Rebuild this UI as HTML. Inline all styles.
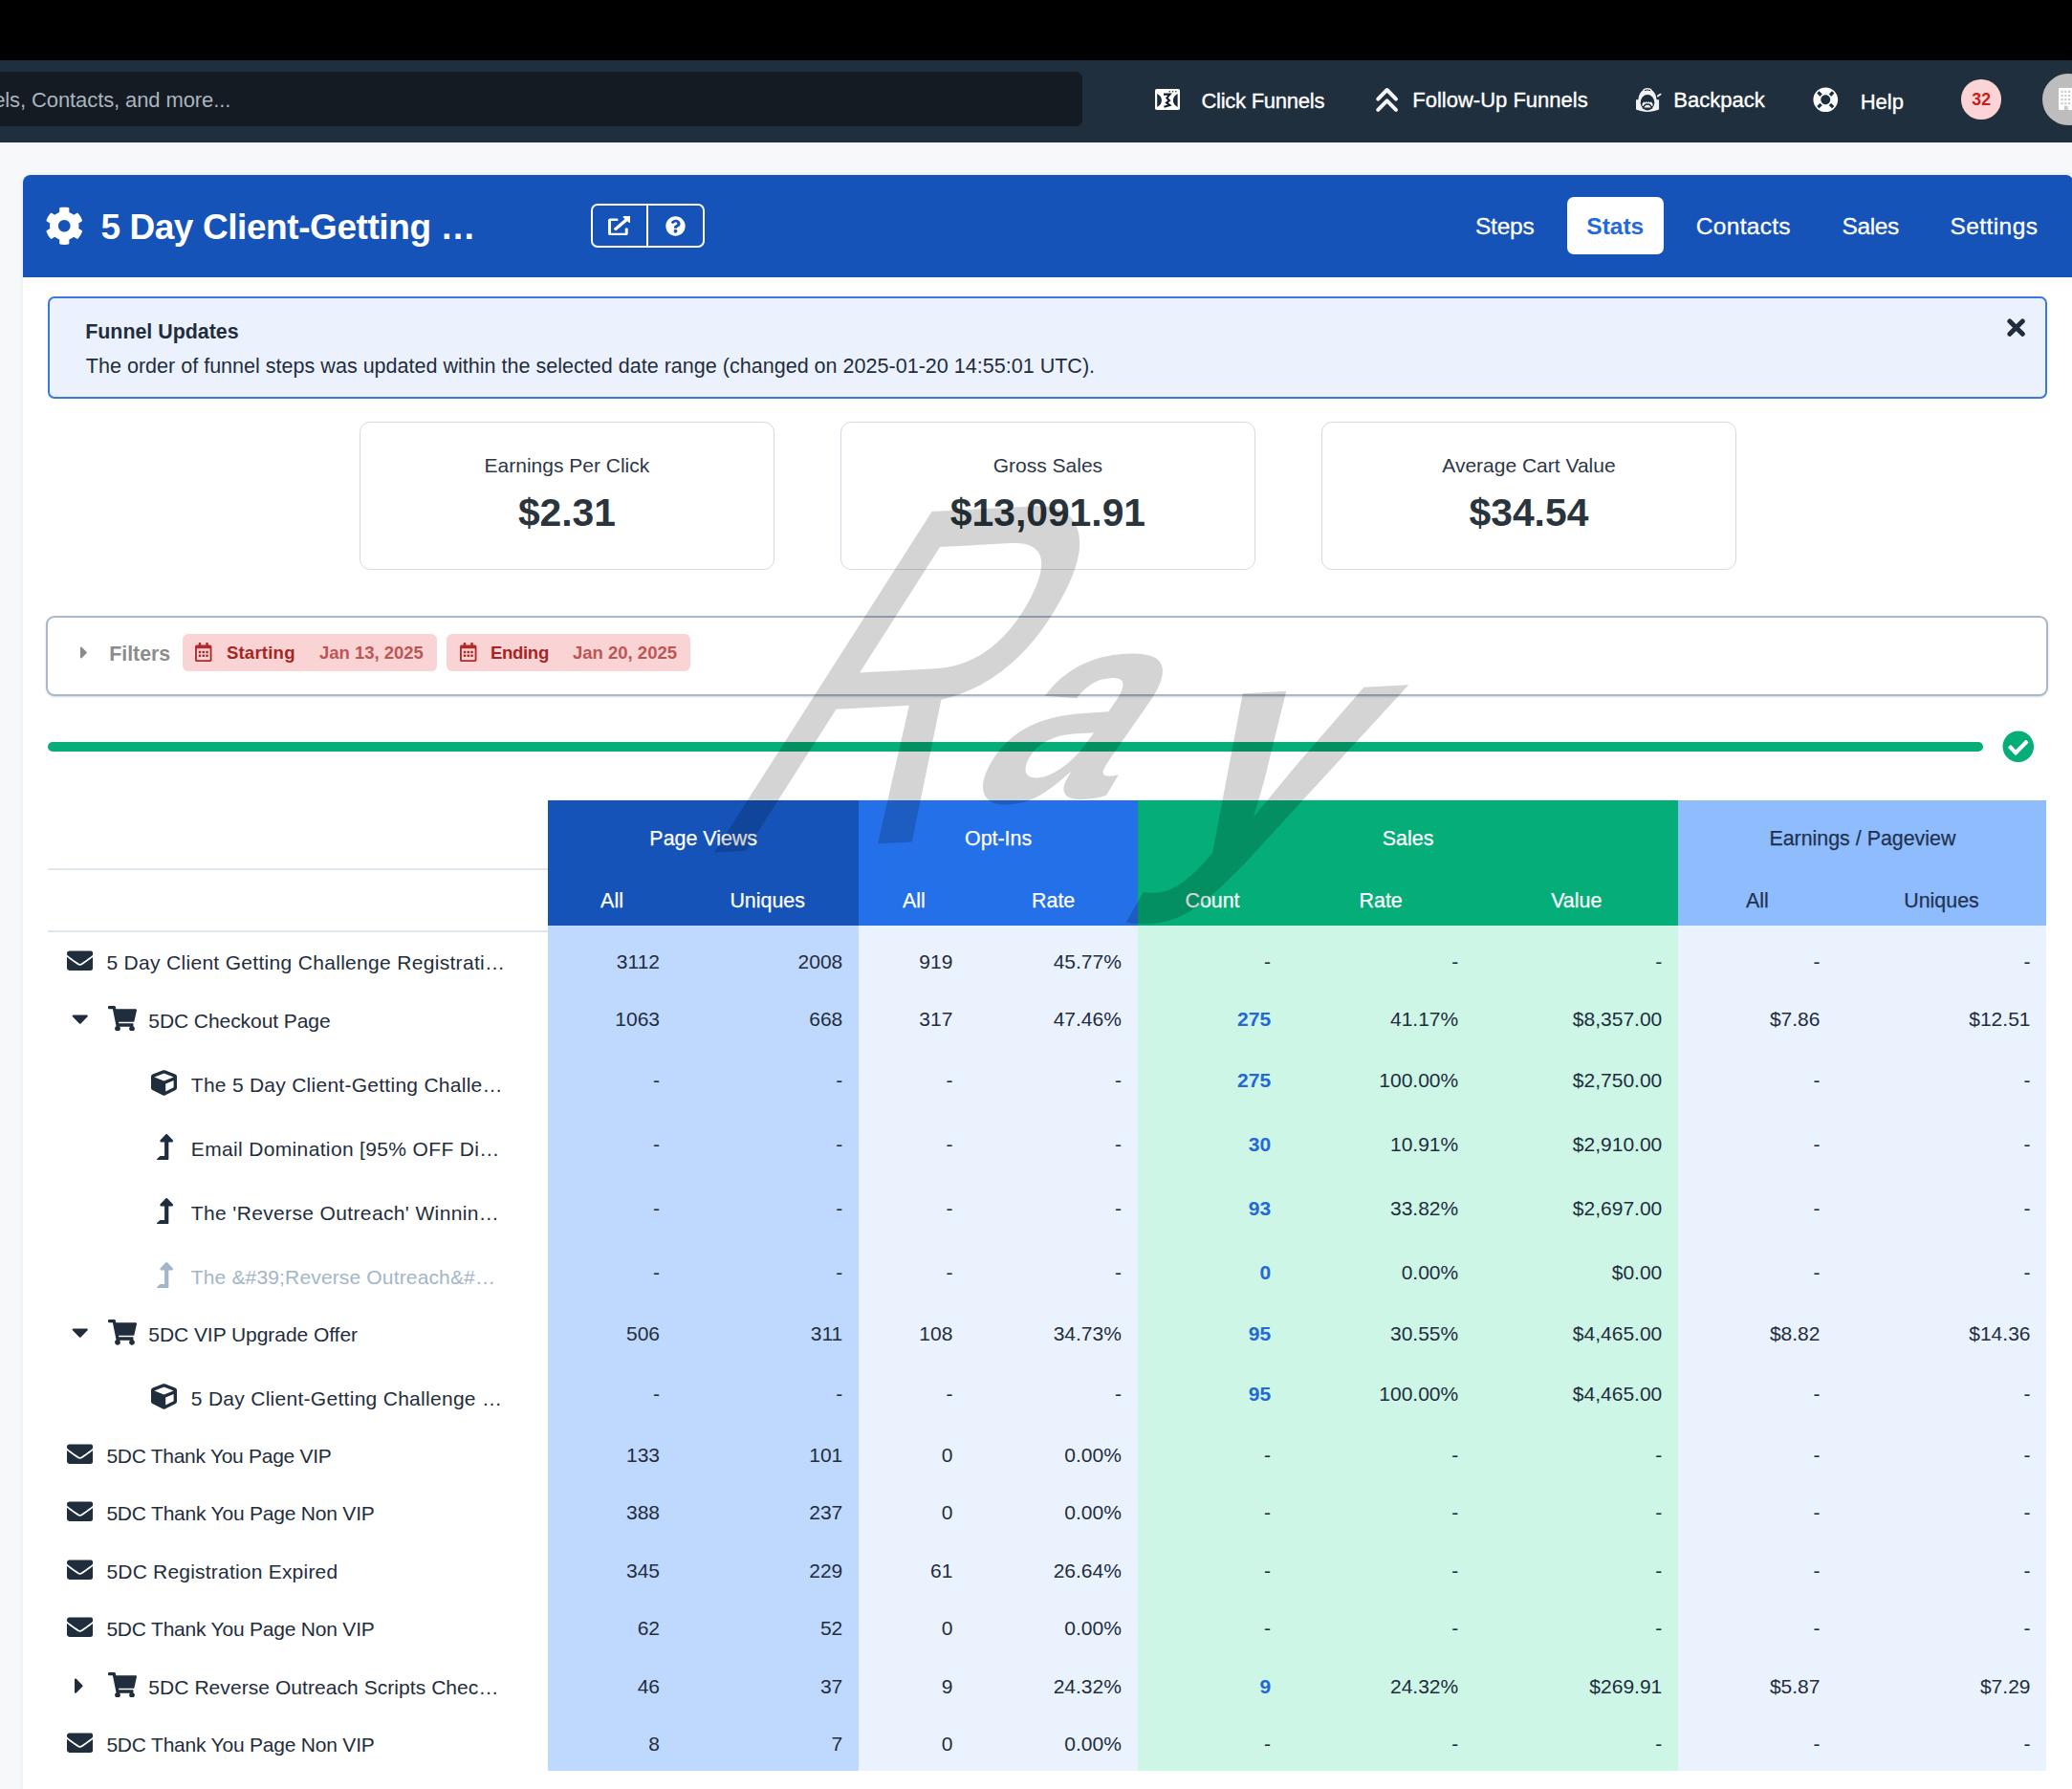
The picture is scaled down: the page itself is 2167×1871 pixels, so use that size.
<!DOCTYPE html>
<html lang="en">
<head>
<meta charset="utf-8">
<title>5 Day Client-Getting Challenge - Stats</title>
<style>
*{box-sizing:border-box;margin:0;padding:0}
html,body{width:2167px;height:1871px;overflow:hidden;background:#f6f8fa}
body{font-family:"Liberation Sans",sans-serif;color:#1f2d3d;font-size:21px;position:relative}
svg{display:block}
.abs{position:absolute}
#os{position:absolute;left:0;top:0;width:2167px;height:62.5px;background:#000}
#nav{position:absolute;left:0;top:62.5px;width:2167px;height:86px;background:#1f2f3e}
#search{position:absolute;left:-10px;top:12.7px;width:1142px;height:57px;border-radius:7px;background:#141b22}
#search span{position:absolute;left:3.2px;top:1.3px;line-height:57px;font-size:22px;color:#a9b4bf;white-space:nowrap;letter-spacing:-0.1px}
.nv{position:absolute;color:#fff;font-size:22px;white-space:nowrap;line-height:26px;-webkit-text-stroke:0.35px #fff}
#badge{position:absolute;left:2051.4px;top:20.8px;width:41.5px;height:41.5px;border-radius:50%;background:#fbd5d5;color:#c81e1e;font-weight:bold;font-size:17.7px;text-align:center;line-height:41.5px;padding-top:0.3px}
#avatar{position:absolute;left:2135.8px;top:14.4px;width:53.8px;height:53.8px;border-radius:50%;background:#bdbdbd;overflow:hidden}
#panel{position:absolute;left:24px;top:182.5px;width:2150px;height:1700px;background:#fff;border-radius:9px 9px 0 0;box-shadow:0 0 4px rgba(60,80,110,.10)}
#fhead{position:absolute;left:0;top:0;width:2143.5px;height:107px;background:#1553b8;border-radius:8px 7px 0 0}
#title{position:absolute;left:81.4px;top:24.5px;font-size:37px;font-weight:bold;color:#fff;white-space:nowrap;line-height:62px;letter-spacing:-0.42px}
#btns{position:absolute;left:594.2px;top:30.5px;width:119px;height:46.3px;border:2px solid #fff;border-radius:7px}
#btns i{position:absolute;left:55.8px;top:0;width:2px;height:100%;background:#fff}
.tab{position:absolute;top:23.6px;height:60.2px;line-height:60.2px;font-size:24.5px;color:#fff;white-space:nowrap;-webkit-text-stroke:0.3px #fff}
.tab.on{background:#fff;color:#2468e0;font-weight:bold;border-radius:7px;text-align:center;-webkit-text-stroke:0}
#alert{position:absolute;left:26px;top:127.3px;width:2091px;height:107.2px;border:2px solid #3b78d8;border-radius:7px;background:#ebf2fe}
#alert b{position:absolute;left:37.2px;top:19.9px;font-size:21.4px;line-height:30px;white-space:nowrap}
#alert span{position:absolute;left:37.8px;top:56.4px;font-size:21.55px;line-height:30px;white-space:nowrap}
.card{position:absolute;top:258px;width:434.7px;height:155.2px;border:1.6px solid #d3dce6;border-radius:11px;text-align:center}
.card .l{position:absolute;left:0;right:0;top:30.5px;font-size:21px;line-height:30px;color:#2d3748}
.card .v{position:absolute;left:0;right:0;top:69.2px;font-size:40.8px;font-weight:bold;line-height:50px;color:#2a343c}
#filters{position:absolute;left:24.4px;top:461.6px;width:2094px;height:84px;border:2px solid #a9b9c9;border-radius:9px;background:#fff;box-shadow:0 1px 2px rgba(80,100,130,.25)}
.pill{position:absolute;top:16.5px;height:39.8px;border-radius:6px;background:#fad4d4;color:#a82424;font-weight:bold;white-space:nowrap}
.pill .a{position:absolute;top:0;line-height:39.8px;font-size:18.6px}
.pill .b{position:absolute;top:0;line-height:39.8px;font-size:18.5px;opacity:.72}
#bar{position:absolute;left:26.4px;top:593.1px;width:2023.6px;height:10px;border-radius:5px;background:#05ad78}

#tbl{position:absolute;left:26px;top:654.8px;width:2090.5px;height:1015px}
.th{position:absolute;text-align:center;font-size:21.4px;line-height:30px;color:#fff;white-space:nowrap;-webkit-text-stroke:0.25px currentColor}
.th.dk{color:#1f3350}
.tr{position:absolute;left:0;width:2090.5px}
.nm{position:absolute;font-size:21px;line-height:30px;white-space:nowrap}
.td{position:absolute;text-align:right;padding-right:17px;font-size:21px;line-height:30px;white-space:nowrap}
.td.lk{color:#2468d8;font-weight:bold}
#wm{position:absolute;left:0;top:0;width:2167px;height:1871px;font-family:"Liberation Sans",sans-serif;font-style:italic;color:#000;opacity:.165;pointer-events:none;overflow:hidden}
#wm span{position:absolute;line-height:1;white-space:nowrap;transform-origin:0 84.65%;transform:rotate(-3deg) skewX(-30deg)}
#wm .r{font-size:500px;left:736px;top:468.8px;transform:rotate(-3deg) skewX(-30deg) scaleX(.71)}
#wm .a{font-size:276px;font-weight:bold;left:1013px;top:607.4px}
#wm .y{font-size:320px;font-weight:bold;left:1216px;top:628.1px;transform:rotate(-3deg) skewX(-24deg)}
</style>
</head>
<body>
<div id="os"></div>
<div id="nav">
  <div id="search"><span>els, Contacts, and more...</span></div>
  <svg class="abs" style="left:1208.2px;top:30.5px" width="26" height="22" viewBox="0 0 26 22"><rect x="0" y="0" width="26" height="22" rx="1.8" fill="#fff"/><path d="M2.2 5 C8.5 8.2 8.5 15.8 2.2 19 Z" fill="#1b2b3c"/><path d="M23.6 5 C17.3 8.2 17.3 15.8 23.6 19 Z" fill="#1b2b3c"/><path d="M9 5.6 L15.6 5.6 L12.4 9.4 L15 12.2 L12 14.4 L15.4 17 L9.4 18.8" fill="none" stroke="#141c26" stroke-width="2.1" stroke-linejoin="miter"/><circle cx="15.3" cy="2.7" r=".8" fill="#222"/><circle cx="18.6" cy="2.7" r=".8" fill="#222"/><circle cx="21.9" cy="2.7" r=".8" fill="#222"/></svg>
  <div class="nv" style="left:1256.4px;top:30.6px;letter-spacing:-0.25px">Click Funnels</div>
  <svg class="abs" style="left:1436px;top:26px" width="30" height="30" viewBox="0 0 30 30"><path d="M5.2 14.6 L14.6 5 L24 14.6 M5.2 25.9 L14.6 16.3 L24 25.9" fill="none" stroke="#f4f5f6" stroke-width="4" stroke-linecap="round" stroke-linejoin="round"/></svg>
  <div class="nv" style="left:1477.3px;top:29.2px">Follow-Up Funnels</div>
  <svg class="abs" style="left:1708px;top:27px" width="32" height="30" viewBox="0 0 32 30"><path d="M3 14.3 L5.4 14.3 C6 8 8.6 5.4 10 4.7 C10.6 1 19.400 1 20 4.700 C21.400 5.400 24 8 24.600 14.300 L27.100 14.300 L27.100 24.600 C19 27.800 11 27.800 3 24.600 Z" fill="#f1f2f4"/><path d="M12 4.600 Q15 3.300 18 4.600" fill="none" stroke="#1b2b3c" stroke-width="1"/><ellipse cx="15" cy="17.300" rx="7.300" ry="8.200" fill="#1b2b3c"/><path d="M9.500 18.500 L11.300 16.300 L12.600 17.600 L13.800 16 L15 17.500 L16.200 16 L17.400 17.600 L18.700 16.300 L20.500 18.500 L20.500 21 L9.500 21 Z" fill="#f1f2f4"/><path d="M10.600 23.200 C11.500 17.600 18.500 17.600 19.400 23.200 Z" fill="#f1f2f4" stroke="#1b2b3c" stroke-width="1.300"/><path d="M25.800 10.600 L28.600 8.600" stroke="#f1f2f4" stroke-width="1.800" stroke-linecap="round"/></svg>
  <div class="nv" style="left:1750.3px;top:29.2px">Backpack</div>
  <svg class="abs" style="left:1896.2px;top:28px" width="26.600" height="26.600" viewBox="0 0 512 512"><path fill="#fff" d="M256 8C119.033 8 8 119.033 8 256s111.033 248 248 248 248-111.033 248-248S392.967 8 256 8zm173.696 119.559l-63.399 63.399c-10.987-18.559-26.670-34.252-45.255-45.255l63.399-63.399a218.396 218.396 0 0 1 45.255 45.255zM256 352c-53.019 0-96-42.981-96-96s42.981-96 96-96 96 42.981 96 96-42.981 96-96 96zM127.559 82.304l63.399 63.399c-18.559 10.987-34.252 26.670-45.255 45.255l-63.399-63.399a218.372 218.372 0 0 1 45.255-45.255zM82.304 384.441l63.399-63.399c10.987 18.559 26.670 34.252 45.255 45.255l-63.399 63.399a218.396 218.396 0 0 1-45.255-45.255zm302.137 45.255l-63.399-63.399c18.559-10.987 34.252-26.670 45.255-45.255l63.399 63.399a218.403 218.403 0 0 1-45.255 45.255z"/></svg>
  <div class="nv" style="left:1945.7px;top:31.1px">Help</div>
  <div id="badge">32</div>
  <div id="avatar"><svg class="abs" style="left:17.3px;top:15.2px" width="16.4" height="24.6" viewBox="0 0 20 30"><rect x="0" y="0" width="20" height="28" rx="1.500" fill="#fff"/><g fill="#c9c9c9"><rect x="3" y="3.500" width="2.600" height="2.600"/><rect x="7.600" y="3.500" width="2.600" height="2.600"/><rect x="12.200" y="3.500" width="2.600" height="2.600"/><rect x="3" y="8.500" width="2.600" height="2.600"/><rect x="7.600" y="8.500" width="2.600" height="2.600"/><rect x="12.200" y="8.500" width="2.600" height="2.600"/><rect x="3" y="13.500" width="2.600" height="2.600"/><rect x="7.600" y="13.500" width="2.600" height="2.600"/><rect x="12.200" y="13.500" width="2.600" height="2.600"/><rect x="3" y="18.500" width="2.600" height="2.600"/><rect x="7.600" y="18.500" width="2.600" height="2.600"/><rect x="12.200" y="18.500" width="2.600" height="2.600"/><rect x="7" y="23" width="5" height="5"/></g></svg></div>
</div>
<div id="panel">
  <div id="fhead">
    <svg class="abs" style="left:22.600px;top:33px" width="40.500" height="40.500" viewBox="0 0 512 512"><path fill="#fff" d="M487.4 315.7l-42.6-24.600c4.300-23.200 4.300-47 0-70.200l42.600-24.600c4.900-2.800 7.100-8.600 5.500-14-11.100-35.600-30-67.800-54.700-94.600-3.800-4.100-10-5.100-14.800-2.300L380.800 110c-17.900-15.400-38.500-27.300-60.800-35.100V25.800c0-5.600-3.900-10.500-9.400-11.700-36.700-8.200-74.300-7.800-109.200 0-5.500 1.200-9.400 6.100-9.400 11.700V75c-22.200 7.900-42.800 19.800-60.800 35.100L88.700 85.500c-4.900-2.800-11-1.900-14.800 2.300-24.700 26.700-43.600 58.900-54.700 94.600-1.700 5.400.6 11.200 5.500 14L67.300 221c-4.300 23.200-4.300 47 0 70.200l-42.600 24.600c-4.900 2.800-7.100 8.600-5.500 14 11.100 35.600 30 67.800 54.700 94.600 3.800 4.100 10 5.100 14.800 2.300l42.600-24.600c17.900 15.400 38.500 27.300 60.800 35.100v49.200c0 5.600 3.900 10.500 9.400 11.700 36.700 8.200 74.300 7.800 109.200 0 5.500-1.200 9.400-6.100 9.400-11.700v-49.200c22.200-7.900 42.800-19.800 60.800-35.100l42.600 24.600c4.900 2.800 11 1.900 14.800-2.300 24.700-26.700 43.600-58.900 54.700-94.600 1.500-5.500-.7-11.300-5.600-14.100zM256 336c-44.100 0-80-35.900-80-80s35.900-80 80-80 80 35.900 80 80-35.900 80-80 80z"/></svg>
    <div id="title">5 Day Client-Getting …</div>
    <div id="btns"><i></i>
      <svg class="abs" style="left:15.500px;top:10.500px" width="23.700" height="20.200" viewBox="0 0 512 512" preserveAspectRatio="none"><path fill="#fff" d="M432,320H400a16,16,0,0,0-16,16V448H64V128H208a16,16,0,0,0,16-16V80a16,16,0,0,0-16-16H48A48,48,0,0,0,0,112V464a48,48,0,0,0,48,48H400a48,48,0,0,0,48-48V336A16,16,0,0,0,432,320ZM488,0h-128c-21.370,0-32.050,25.910-17,41l35.730,35.730L135,320.370a24,24,0,0,0,0,34L157.670,377a24,24,0,0,0,34,0L435.280,133.320,471,169c15,15,41,4.500,41-17V24A24,24,0,0,0,488,0Z"/></svg>
      <svg class="abs" style="left:76px;top:10.600px" width="21" height="21" viewBox="0 0 512 512"><path fill="#fff" d="M504 256c0 136.997-111.043 248-248 248S8 392.997 8 256C8 119.083 119.043 8 256 8s248 111.083 248 248zM262.655 90c-54.497 0-89.255 22.957-116.549 63.758-3.536 5.286-2.353 12.415 2.715 16.258l34.699 26.310c5.205 3.947 12.621 3.008 16.665-2.122 17.864-22.658 30.113-35.797 57.303-35.797 20.429 0 45.698 13.148 45.698 32.958 0 14.976-12.363 22.667-32.534 33.976C247.128 238.528 216 254.941 216 296v4c0 6.627 5.373 12 12 12h56c6.627 0 12-5.373 12-12v-1.333c0-28.462 83.186-29.647 83.186-106.667 0-58.002-60.165-102-116.531-102zM256 338c-25.365 0-46 20.635-46 46 0 25.364 20.635 46 46 46s46-20.636 46-46c0-25.365-20.635-46-46-46z"/></svg>
    </div>
    <div class="tab" style="left:1519px;top:24.900px;letter-spacing:-0.25px">Steps</div>
    <div class="tab on" style="left:1614.600px;width:101.400px;padding-top:1.300px">Stats</div>
    <div class="tab" style="left:1749.800px;top:24.900px;letter-spacing:0.3px">Contacts</div>
    <div class="tab" style="left:1902.500px;top:24.900px;letter-spacing:-0.4px">Sales</div>
    <div class="tab" style="left:2015.600px;top:24.900px;letter-spacing:0.4px">Settings</div>
  </div>
  <div id="alert"><b>Funnel Updates</b><span>The order of funnel steps was updated within the selected date range (changed on 2025-01-20 14:55:01 UTC).</span><svg class="abs" style="left:2047.4px;top:21px" width="19.2" height="19.2" viewBox="0 0 19.2 19.2"><path d="M2.9 2.9 L16.3 16.3 M16.3 2.9 L2.9 16.3" stroke="#1f2d3d" stroke-width="5" stroke-linecap="round"/></svg></div>
  <div class="card" style="left:351.6px"><div class="l">Earnings Per Click</div><div class="v">$2.31</div></div>
  <div class="card" style="left:854.6px"><div class="l">Gross Sales</div><div class="v">$13,091.91</div></div>
  <div class="card" style="left:1357.6px"><div class="l">Average Cart Value</div><div class="v">$34.54</div></div>
  <div id="filters">
    <svg class="abs" style="left:33.600px;top:26.300px" width="7.900" height="21" viewBox="0 0 192 512"><path fill="#8a8a8a" d="M0 384.662V127.338c0-17.818 21.543-26.741 34.142-14.142l128.662 128.662c7.810 7.810 7.810 20.474 0 28.284L34.142 398.804C21.543 411.404 0 402.480 0 384.662z"/></svg>
    <div class="abs" style="left:63.900px;top:23.200px;font-size:21.300px;font-weight:bold;line-height:30px;color:#8c8c8c">Filters</div>
    <div class="pill" style="left:140.900px;width:265.500px">
      <svg class="abs" style="left:12.800px;top:9.100px" width="17.500" height="20" viewBox="0 0 448 512"><path fill="#b02a2a" d="M148 288h-40c-6.600 0-12-5.400-12-12v-40c0-6.600 5.400-12 12-12h40c6.600 0 12 5.400 12 12v40c0 6.600-5.400 12-12 12zm108-12v-40c0-6.600-5.400-12-12-12h-40c-6.600 0-12 5.400-12 12v40c0 6.600 5.400 12 12 12h40c6.600 0 12-5.400 12-12zm96 0v-40c0-6.600-5.400-12-12-12h-40c-6.600 0-12 5.400-12 12v40c0 6.600 5.400 12 12 12h40c6.600 0 12-5.400 12-12zm-96 96v-40c0-6.600-5.400-12-12-12h-40c-6.600 0-12 5.400-12 12v40c0 6.600 5.400 12 12 12h40c6.600 0 12-5.400 12-12zm-96 0v-40c0-6.600-5.400-12-12-12h-40c-6.600 0-12 5.400-12 12v40c0 6.600 5.400 12 12 12h40c6.600 0 12-5.400 12-12zm192 0v-40c0-6.600-5.400-12-12-12h-40c-6.600 0-12 5.400-12 12v40c0 6.600 5.400 12 12 12h40c6.600 0 12-5.400 12-12zm96-260v352c0 26.500-21.500 48-48 48H48c-26.500 0-48-21.500-48-48V112c0-26.500 21.500-48 48-48h48V12c0-6.600 5.400-12 12-12h40c6.600 0 12 5.400 12 12v52h128V12c0-6.600 5.400-12 12-12h40c6.600 0 12 5.400 12 12v52h48c26.500 0 48 21.500 48 48zm-48 346V160H48v298c0 3.300 2.700 6 6 6h340c3.300 0 6-2.700 6-6z"/></svg>
      <span class="a" style="left:45.600px;letter-spacing:0.2px">Starting</span><span class="b" style="left:142.600px">Jan 13, 2025</span>
    </div>
    <div class="pill" style="left:417px;width:255px">
      <svg class="abs" style="left:13.700px;top:9.100px" width="17.500" height="20" viewBox="0 0 448 512"><path fill="#b02a2a" d="M148 288h-40c-6.600 0-12-5.400-12-12v-40c0-6.600 5.400-12 12-12h40c6.600 0 12 5.400 12 12v40c0 6.600-5.400 12-12 12zm108-12v-40c0-6.600-5.400-12-12-12h-40c-6.600 0-12 5.400-12 12v40c0 6.600 5.400 12 12 12h40c6.600 0 12-5.400 12-12zm96 0v-40c0-6.600-5.400-12-12-12h-40c-6.600 0-12 5.400-12 12v40c0 6.600 5.400 12 12 12h40c6.600 0 12-5.400 12-12zm-96 96v-40c0-6.600-5.400-12-12-12h-40c-6.600 0-12 5.400-12 12v40c0 6.600 5.400 12 12 12h40c6.600 0 12-5.400 12-12zm-96 0v-40c0-6.600-5.400-12-12-12h-40c-6.600 0-12 5.400-12 12v40c0 6.600 5.400 12 12 12h40c6.600 0 12-5.400 12-12zm192 0v-40c0-6.600-5.400-12-12-12h-40c-6.600 0-12 5.400-12 12v40c0 6.600 5.400 12 12 12h40c6.600 0 12-5.400 12-12zm96-260v352c0 26.500-21.500 48-48 48H48c-26.500 0-48-21.500-48-48V112c0-26.500 21.500-48 48-48h48V12c0-6.600 5.400-12 12-12h40c6.600 0 12 5.400 12 12v52h128V12c0-6.600 5.400-12 12-12h40c6.600 0 12 5.400 12 12v52h48c26.500 0 48 21.500 48 48zm-48 346V160H48v298c0 3.300 2.700 6 6 6h340c3.300 0 6-2.700 6-6z"/></svg>
      <span class="a" style="left:45.600px;letter-spacing:-0.35px">Ending</span><span class="b" style="left:131.600px">Jan 20, 2025</span>
    </div>
  </div>
  <div id="bar"></div>
  <svg class="abs" style="left:2070.100px;top:581.200px" width="33.600" height="33.600" viewBox="0 0 512 512"><circle cx="256" cy="256" r="200" fill="#fff"/><path fill="#05ad78" d="M504 256c0 136.967-111.033 248-248 248S8 392.967 8 256 119.033 8 256 8s248 111.033 248 248zM227.314 387.314l184-184c6.248-6.248 6.248-16.379 0-22.627l-22.627-22.627c-6.248-6.249-16.379-6.249-22.628 0L216 308.118l-70.059-70.059c-6.248-6.248-16.379-6.248-22.628 0l-22.627 22.627c-6.248 6.248-6.248 16.379 0 22.627l104 104c6.249 6.249 16.379 6.249 22.628.001z"/></svg>
  <!--TB0--><div id="tbl">
  <div class="abs" style="left:523px;top:0;width:325.3px;height:130.3px;background:#1553b8"></div><div class="abs" style="left:523px;top:130.3px;width:325.3px;height:884.7px;background:#bfd9fe"></div>
  <div class="abs" style="left:848.3px;top:0;width:291.6px;height:130.3px;background:#2370e8"></div><div class="abs" style="left:848.3px;top:130.3px;width:291.6px;height:884.7px;background:#eaf2fe"></div>
  <div class="abs" style="left:1139.9px;top:0;width:565.4px;height:130.3px;background:#05ad78"></div><div class="abs" style="left:1139.9px;top:130.3px;width:565.4px;height:884.7px;background:#cdf6e7"></div>
  <div class="abs" style="left:1705.3px;top:0;width:385.2px;height:130.3px;background:#8fbcfd"></div><div class="abs" style="left:1705.3px;top:130.3px;width:385.2px;height:884.7px;background:#eaf2fe"></div>
  <div class="abs" style="left:0;top:70.4px;width:523px;height:2px;background:#dfe6ec"></div><div class="abs" style="left:0;top:136px;width:523px;height:2px;background:#dfe6ec"></div>
  <div class="th " style="left:523px;width:325.3px;top:24.88px">Page Views</div>
  <div class="th " style="left:848.3px;width:291.6px;top:24.88px">Opt-Ins</div>
  <div class="th " style="left:1139.9px;width:565.4px;top:24.88px">Sales</div>
  <div class="th dk" style="left:1705.3px;width:385.2px;top:24.88px">Earnings / Pageview</div>
  <div class="th " style="left:523px;width:134px;top:89.88px">All</div>
  <div class="th " style="left:657px;width:191.3px;top:89.88px">Uniques</div>
  <div class="th " style="left:848.3px;width:115.1px;top:89.88px">All</div>
  <div class="th " style="left:963.4px;width:176.5px;top:89.88px">Rate</div>
  <div class="th " style="left:1139.9px;width:156.2px;top:89.88px">Count</div>
  <div class="th " style="left:1296.1px;width:196.1px;top:89.88px">Rate</div>
  <div class="th " style="left:1492.2px;width:213.1px;top:89.88px">Value</div>
  <div class="th dk" style="left:1705.3px;width:165.2px;top:89.88px">All</div>
  <div class="th dk" style="left:1870.5px;width:220px;top:89.88px">Uniques</div>
  <div class="tr" style="top:136.5px;height:60.4px"><svg class="abs" style="left:20px;top:17.1px" width="27.3" height="27.3" viewBox="0 0 512 512"><path fill="#1f2d3d" d="M502.3 190.8c3.9-3.1 9.7-.2 9.7 4.7V400c0 26.500-21.500 48-48 48H48c-26.500 0-48-21.500-48-48V195.600c0-5 5.700-7.800 9.700-4.700 22.400 17.400 52.100 39.500 154.100 113.600 21.100 15.400 56.700 47.800 92.200 47.600 35.700.3 72-32.800 92.300-47.600 102-74.100 131.600-96.300 154-113.700zM256 320c23.200.4 56.600-29.200 73.400-41.400 132.700-96.300 142.800-104.700 173.400-128.700 5.800-4.500 9.200-11.500 9.200-18.900v-19c0-26.500-21.500-48-48-48H48C21.500 64 0 85.500 0 112v19c0 7.400 3.400 14.300 9.200 18.900 30.600 23.900 40.700 32.400 173.400 128.700 16.800 12.200 50.200 41.800 73.400 41.400z"/></svg><div class="nm" style="left:61.4px;top:18.22px;color:#1f2d3d;letter-spacing:0.312px">5 Day Client Getting Challenge Registrati…</div><div class="td" style="left:523px;width:134px;top:17.12px">3112</div><div class="td" style="left:657px;width:191.3px;top:17.12px">2008</div><div class="td" style="left:848.3px;width:115.1px;top:17.12px">919</div><div class="td" style="left:963.4px;width:176.5px;top:17.12px">45.77%</div><div class="td" style="left:1139.9px;width:156.2px;top:17.12px">-</div><div class="td" style="left:1296.1px;width:196.1px;top:17.12px">-</div><div class="td" style="left:1492.2px;width:213.1px;top:17.12px">-</div><div class="td" style="left:1705.3px;width:165.2px;top:17.12px">-</div><div class="td" style="left:1870.5px;width:220px;top:17.12px">-</div></div>
  <div class="tr" style="top:197px;height:60.4px"><svg class="abs" style="left:25px;top:16.4px" width="17.5" height="28" viewBox="0 0 320 512"><path fill="#1f2d3d" d="M31.3 192h257.3c17.800 0 26.700 21.500 14.100 34.100L174.100 354.800c-7.800 7.800-20.500 7.800-28.300 0L17.200 226.100C4.600 213.500 13.500 192 31.300 192z"/></svg><svg class="abs" style="left:63px;top:17.3px" width="30" height="26.7" viewBox="0 0 576 512"><path fill="#1f2d3d" d="M528.12 301.319l47.273-208C578.806 78.301 567.391 64 551.99 64H159.208l-9.166-44.810C147.758 8.021 137.930 0 126.529 0H24C10.745 0 0 10.745 0 24v16c0 13.255 10.745 24 24 24h69.883l70.248 343.435C147.325 417.100 136 435.222 136 456c0 30.928 25.072 56 56 56s56-25.072 56-56c0-15.674-6.447-29.835-16.824-40h209.647C430.447 426.165 424 440.326 424 456c0 30.928 25.072 56 56 56s56-25.072 56-56c0-22.172-12.888-41.332-31.579-50.405l5.517-24.276c3.413-15.018-8.002-29.319-23.403-29.319H218.117l-6.545-32h293.145c11.206 0 20.920-7.754 23.403-18.681z"/></svg><div class="nm" style="left:105.3px;top:18.22px;color:#1f2d3d;letter-spacing:-0.07px">5DC Checkout Page</div><div class="td" style="left:523px;width:134px;top:17.12px">1063</div><div class="td" style="left:657px;width:191.3px;top:17.12px">668</div><div class="td" style="left:848.3px;width:115.1px;top:17.12px">317</div><div class="td" style="left:963.4px;width:176.5px;top:17.12px">47.46%</div><div class="td lk" style="left:1139.9px;width:156.2px;top:17.12px">275</div><div class="td" style="left:1296.1px;width:196.1px;top:17.12px">41.17%</div><div class="td" style="left:1492.2px;width:213.1px;top:17.12px">$8,357.00</div><div class="td" style="left:1705.3px;width:165.2px;top:17.12px">$7.86</div><div class="td" style="left:1870.5px;width:220px;top:17.12px">$12.51</div></div>
  <div class="tr" style="top:257.7px;height:67px"><svg class="abs" style="left:108.1px;top:23.9px" width="27" height="27" viewBox="0 0 512 512"><path fill="#1f2d3d" d="M239.1 6.3l-208 78c-18.700 7-31.100 25-31.100 45v225.100c0 18.200 10.300 34.800 26.500 42.900l208 104c13.500 6.800 29.400 6.800 42.900 0l208-104c16.300-8.100 26.500-24.800 26.500-42.900V129.300c0-20-12.400-37.900-31.100-44.900l-208-78C262 2.200 250 2.200 239.100 6.300zM256 68.400l192 72v1.100l-192 78-192-78v-1.100l192-72zm32 356V275.500l160-65v133.900l-160 80z"/></svg><div class="nm" style="left:149.8px;top:24.62px;color:#1f2d3d;letter-spacing:0.266px">The 5 Day Client-Getting Challe…</div><div class="td" style="left:523px;width:134px;top:20.22px">-</div><div class="td" style="left:657px;width:191.3px;top:20.22px">-</div><div class="td" style="left:848.3px;width:115.1px;top:20.22px">-</div><div class="td" style="left:963.4px;width:176.5px;top:20.22px">-</div><div class="td lk" style="left:1139.9px;width:156.2px;top:20.22px">275</div><div class="td" style="left:1296.1px;width:196.1px;top:20.22px">100.00%</div><div class="td" style="left:1492.2px;width:213.1px;top:20.22px">$2,750.00</div><div class="td" style="left:1705.3px;width:165.2px;top:20.22px">-</div><div class="td" style="left:1870.5px;width:220px;top:20.22px">-</div></div>
  <div class="tr" style="top:324.7px;height:67px"><svg class="abs" style="left:113.6px;top:23.8px" width="17" height="27.2" viewBox="0 0 320 512"><path fill="#1f2d3d" d="M313.553 119.669L209.587 7.666c-9.485-10.214-25.676-10.229-35.174 0L70.438 119.669C56.232 134.969 67.062 160 88.025 160H152v272H68.024a11.996 11.996 0 0 0-8.485 3.515l-56 56C-4.021 499.074 1.333 512 12.024 512H208c13.255 0 24-10.745 24-24V160h63.966c20.878 0 31.851-24.969 17.587-40.331z"/></svg><div class="nm" style="left:149.8px;top:24.62px;color:#1f2d3d;letter-spacing:0.348px">Email Domination [95% OFF Di…</div><div class="td" style="left:523px;width:134px;top:20.22px">-</div><div class="td" style="left:657px;width:191.3px;top:20.22px">-</div><div class="td" style="left:848.3px;width:115.1px;top:20.22px">-</div><div class="td" style="left:963.4px;width:176.5px;top:20.22px">-</div><div class="td lk" style="left:1139.9px;width:156.2px;top:20.22px">30</div><div class="td" style="left:1296.1px;width:196.1px;top:20.22px">10.91%</div><div class="td" style="left:1492.2px;width:213.1px;top:20.22px">$2,910.00</div><div class="td" style="left:1705.3px;width:165.2px;top:20.22px">-</div><div class="td" style="left:1870.5px;width:220px;top:20.22px">-</div></div>
  <div class="tr" style="top:391.7px;height:67px"><svg class="abs" style="left:113.6px;top:23.8px" width="17" height="27.2" viewBox="0 0 320 512"><path fill="#1f2d3d" d="M313.553 119.669L209.587 7.666c-9.485-10.214-25.676-10.229-35.174 0L70.438 119.669C56.232 134.969 67.062 160 88.025 160H152v272H68.024a11.996 11.996 0 0 0-8.485 3.515l-56 56C-4.021 499.074 1.333 512 12.024 512H208c13.255 0 24-10.745 24-24V160h63.966c20.878 0 31.851-24.969 17.587-40.331z"/></svg><div class="nm" style="left:149.8px;top:24.62px;color:#1f2d3d;letter-spacing:0.363px">The 'Reverse Outreach' Winnin…</div><div class="td" style="left:523px;width:134px;top:20.22px">-</div><div class="td" style="left:657px;width:191.3px;top:20.22px">-</div><div class="td" style="left:848.3px;width:115.1px;top:20.22px">-</div><div class="td" style="left:963.4px;width:176.5px;top:20.22px">-</div><div class="td lk" style="left:1139.9px;width:156.2px;top:20.22px">93</div><div class="td" style="left:1296.1px;width:196.1px;top:20.22px">33.82%</div><div class="td" style="left:1492.2px;width:213.1px;top:20.22px">$2,697.00</div><div class="td" style="left:1705.3px;width:165.2px;top:20.22px">-</div><div class="td" style="left:1870.5px;width:220px;top:20.22px">-</div></div>
  <div class="tr" style="top:458.7px;height:67px"><svg class="abs" style="left:113.6px;top:23.8px" width="17" height="27.2" viewBox="0 0 320 512"><path fill="#a3b6c9" d="M313.553 119.669L209.587 7.666c-9.485-10.214-25.676-10.229-35.174 0L70.438 119.669C56.232 134.969 67.062 160 88.025 160H152v272H68.024a11.996 11.996 0 0 0-8.485 3.515l-56 56C-4.021 499.074 1.333 512 12.024 512H208c13.255 0 24-10.745 24-24V160h63.966c20.878 0 31.851-24.969 17.587-40.331z"/></svg><div class="nm" style="left:149.8px;top:24.62px;color:#a3b6c9;letter-spacing:0.154px">The &amp;#39;Reverse Outreach&amp;#…</div><div class="td" style="left:523px;width:134px;top:20.22px">-</div><div class="td" style="left:657px;width:191.3px;top:20.22px">-</div><div class="td" style="left:848.3px;width:115.1px;top:20.22px">-</div><div class="td" style="left:963.4px;width:176.5px;top:20.22px">-</div><div class="td lk" style="left:1139.9px;width:156.2px;top:20.22px">0</div><div class="td" style="left:1296.1px;width:196.1px;top:20.22px">0.00%</div><div class="td" style="left:1492.2px;width:213.1px;top:20.22px">$0.00</div><div class="td" style="left:1705.3px;width:165.2px;top:20.22px">-</div><div class="td" style="left:1870.5px;width:220px;top:20.22px">-</div></div>
  <div class="tr" style="top:525.5px;height:60.4px"><svg class="abs" style="left:25px;top:16.4px" width="17.5" height="28" viewBox="0 0 320 512"><path fill="#1f2d3d" d="M31.3 192h257.3c17.800 0 26.700 21.500 14.100 34.100L174.100 354.800c-7.800 7.800-20.500 7.800-28.300 0L17.200 226.100C4.600 213.500 13.500 192 31.300 192z"/></svg><svg class="abs" style="left:63px;top:17.3px" width="30" height="26.7" viewBox="0 0 576 512"><path fill="#1f2d3d" d="M528.12 301.319l47.273-208C578.806 78.301 567.391 64 551.99 64H159.208l-9.166-44.810C147.758 8.021 137.930 0 126.529 0H24C10.745 0 0 10.745 0 24v16c0 13.255 10.745 24 24 24h69.883l70.248 343.435C147.325 417.100 136 435.222 136 456c0 30.928 25.072 56 56 56s56-25.072 56-56c0-15.674-6.447-29.835-16.824-40h209.647C430.447 426.165 424 440.326 424 456c0 30.928 25.072 56 56 56s56-25.072 56-56c0-22.172-12.888-41.332-31.579-50.405l5.517-24.276c3.413-15.018-8.002-29.319-23.403-29.319H218.117l-6.545-32h293.145c11.206 0 20.920-7.754 23.403-18.681z"/></svg><div class="nm" style="left:105.3px;top:18.22px;color:#1f2d3d;letter-spacing:-0.057px">5DC VIP Upgrade Offer</div><div class="td" style="left:523px;width:134px;top:17.12px">506</div><div class="td" style="left:657px;width:191.3px;top:17.12px">311</div><div class="td" style="left:848.3px;width:115.1px;top:17.12px">108</div><div class="td" style="left:963.4px;width:176.5px;top:17.12px">34.73%</div><div class="td lk" style="left:1139.9px;width:156.2px;top:17.12px">95</div><div class="td" style="left:1296.1px;width:196.1px;top:17.12px">30.55%</div><div class="td" style="left:1492.2px;width:213.1px;top:17.12px">$4,465.00</div><div class="td" style="left:1705.3px;width:165.2px;top:17.12px">$8.82</div><div class="td" style="left:1870.5px;width:220px;top:17.12px">$14.36</div></div>
  <div class="tr" style="top:585.9px;height:67px"><svg class="abs" style="left:108.1px;top:23.9px" width="27" height="27" viewBox="0 0 512 512"><path fill="#1f2d3d" d="M239.1 6.3l-208 78c-18.700 7-31.100 25-31.100 45v225.100c0 18.200 10.300 34.800 26.500 42.900l208 104c13.500 6.800 29.400 6.800 42.900 0l208-104c16.300-8.100 26.500-24.800 26.500-42.900V129.300c0-20-12.400-37.900-31.100-44.900l-208-78C262 2.200 250 2.200 239.100 6.300zM256 68.400l192 72v1.100l-192 78-192-78v-1.100l192-72zm32 356V275.500l160-65v133.900l-160 80z"/></svg><div class="nm" style="left:149.8px;top:24.62px;color:#1f2d3d;letter-spacing:0.284px">5 Day Client-Getting Challenge …</div><div class="td" style="left:523px;width:134px;top:20.22px">-</div><div class="td" style="left:657px;width:191.3px;top:20.22px">-</div><div class="td" style="left:848.3px;width:115.1px;top:20.22px">-</div><div class="td" style="left:963.4px;width:176.5px;top:20.22px">-</div><div class="td lk" style="left:1139.9px;width:156.2px;top:20.22px">95</div><div class="td" style="left:1296.1px;width:196.1px;top:20.22px">100.00%</div><div class="td" style="left:1492.2px;width:213.1px;top:20.22px">$4,465.00</div><div class="td" style="left:1705.3px;width:165.2px;top:20.22px">-</div><div class="td" style="left:1870.5px;width:220px;top:20.22px">-</div></div>
  <div class="tr" style="top:652.6px;height:60.4px"><svg class="abs" style="left:20px;top:17.1px" width="27.3" height="27.3" viewBox="0 0 512 512"><path fill="#1f2d3d" d="M502.3 190.8c3.9-3.1 9.7-.2 9.7 4.7V400c0 26.500-21.500 48-48 48H48c-26.500 0-48-21.500-48-48V195.600c0-5 5.700-7.800 9.700-4.700 22.400 17.400 52.100 39.500 154.100 113.600 21.100 15.400 56.700 47.800 92.200 47.600 35.700.3 72-32.800 92.300-47.600 102-74.100 131.600-96.300 154-113.700zM256 320c23.200.4 56.600-29.200 73.400-41.400 132.700-96.300 142.800-104.700 173.400-128.700 5.800-4.500 9.200-11.500 9.200-18.900v-19c0-26.500-21.500-48-48-48H48C21.500 64 0 85.500 0 112v19c0 7.400 3.400 14.300 9.200 18.900 30.600 23.900 40.700 32.400 173.400 128.700 16.800 12.200 50.200 41.800 73.400 41.400z"/></svg><div class="nm" style="left:61.4px;top:18.22px;color:#1f2d3d;letter-spacing:-0.277px">5DC Thank You Page VIP</div><div class="td" style="left:523px;width:134px;top:17.12px">133</div><div class="td" style="left:657px;width:191.3px;top:17.12px">101</div><div class="td" style="left:848.3px;width:115.1px;top:17.12px">0</div><div class="td" style="left:963.4px;width:176.5px;top:17.12px">0.00%</div><div class="td" style="left:1139.9px;width:156.2px;top:17.12px">-</div><div class="td" style="left:1296.1px;width:196.1px;top:17.12px">-</div><div class="td" style="left:1492.2px;width:213.1px;top:17.12px">-</div><div class="td" style="left:1705.3px;width:165.2px;top:17.12px">-</div><div class="td" style="left:1870.5px;width:220px;top:17.12px">-</div></div>
  <div class="tr" style="top:712.9px;height:60.4px"><svg class="abs" style="left:20px;top:17.1px" width="27.3" height="27.3" viewBox="0 0 512 512"><path fill="#1f2d3d" d="M502.3 190.8c3.9-3.1 9.7-.2 9.7 4.7V400c0 26.500-21.500 48-48 48H48c-26.500 0-48-21.500-48-48V195.600c0-5 5.700-7.800 9.700-4.700 22.400 17.400 52.100 39.500 154.100 113.600 21.100 15.400 56.700 47.800 92.200 47.600 35.700.3 72-32.800 92.300-47.600 102-74.100 131.600-96.300 154-113.700zM256 320c23.200.4 56.600-29.200 73.400-41.400 132.700-96.300 142.800-104.700 173.400-128.700 5.800-4.500 9.200-11.500 9.200-18.900v-19c0-26.500-21.500-48-48-48H48C21.500 64 0 85.500 0 112v19c0 7.400 3.400 14.300 9.200 18.900 30.600 23.900 40.700 32.400 173.400 128.700 16.800 12.200 50.200 41.800 73.400 41.400z"/></svg><div class="nm" style="left:61.4px;top:18.22px;color:#1f2d3d;letter-spacing:-0.21px">5DC Thank You Page Non VIP</div><div class="td" style="left:523px;width:134px;top:17.12px">388</div><div class="td" style="left:657px;width:191.3px;top:17.12px">237</div><div class="td" style="left:848.3px;width:115.1px;top:17.12px">0</div><div class="td" style="left:963.4px;width:176.5px;top:17.12px">0.00%</div><div class="td" style="left:1139.9px;width:156.2px;top:17.12px">-</div><div class="td" style="left:1296.1px;width:196.1px;top:17.12px">-</div><div class="td" style="left:1492.2px;width:213.1px;top:17.12px">-</div><div class="td" style="left:1705.3px;width:165.2px;top:17.12px">-</div><div class="td" style="left:1870.5px;width:220px;top:17.12px">-</div></div>
  <div class="tr" style="top:773.4px;height:60.4px"><svg class="abs" style="left:20px;top:17.1px" width="27.3" height="27.3" viewBox="0 0 512 512"><path fill="#1f2d3d" d="M502.3 190.8c3.9-3.1 9.7-.2 9.7 4.7V400c0 26.500-21.500 48-48 48H48c-26.500 0-48-21.500-48-48V195.600c0-5 5.700-7.800 9.700-4.700 22.400 17.400 52.100 39.500 154.100 113.600 21.100 15.400 56.700 47.800 92.200 47.600 35.700.3 72-32.800 92.300-47.600 102-74.100 131.600-96.300 154-113.700zM256 320c23.200.4 56.600-29.200 73.400-41.400 132.700-96.300 142.800-104.700 173.400-128.700 5.800-4.500 9.200-11.500 9.200-18.900v-19c0-26.500-21.500-48-48-48H48C21.500 64 0 85.500 0 112v19c0 7.400 3.400 14.300 9.200 18.900 30.600 23.900 40.700 32.400 173.400 128.700 16.800 12.200 50.200 41.800 73.400 41.400z"/></svg><div class="nm" style="left:61.4px;top:18.22px;color:#1f2d3d;letter-spacing:0.21px">5DC Registration Expired</div><div class="td" style="left:523px;width:134px;top:17.12px">345</div><div class="td" style="left:657px;width:191.3px;top:17.12px">229</div><div class="td" style="left:848.3px;width:115.1px;top:17.12px">61</div><div class="td" style="left:963.4px;width:176.5px;top:17.12px">26.64%</div><div class="td" style="left:1139.9px;width:156.2px;top:17.12px">-</div><div class="td" style="left:1296.1px;width:196.1px;top:17.12px">-</div><div class="td" style="left:1492.2px;width:213.1px;top:17.12px">-</div><div class="td" style="left:1705.3px;width:165.2px;top:17.12px">-</div><div class="td" style="left:1870.5px;width:220px;top:17.12px">-</div></div>
  <div class="tr" style="top:833.7px;height:60.4px"><svg class="abs" style="left:20px;top:17.1px" width="27.3" height="27.3" viewBox="0 0 512 512"><path fill="#1f2d3d" d="M502.3 190.8c3.9-3.1 9.7-.2 9.7 4.7V400c0 26.500-21.500 48-48 48H48c-26.500 0-48-21.500-48-48V195.600c0-5 5.700-7.800 9.700-4.700 22.400 17.400 52.100 39.500 154.100 113.600 21.100 15.400 56.700 47.800 92.200 47.600 35.700.3 72-32.800 92.300-47.600 102-74.100 131.600-96.300 154-113.700zM256 320c23.200.4 56.600-29.200 73.400-41.400 132.700-96.300 142.800-104.700 173.400-128.700 5.800-4.500 9.200-11.500 9.200-18.900v-19c0-26.500-21.500-48-48-48H48C21.500 64 0 85.500 0 112v19c0 7.400 3.400 14.300 9.200 18.900 30.600 23.900 40.700 32.400 173.400 128.700 16.800 12.200 50.200 41.800 73.400 41.400z"/></svg><div class="nm" style="left:61.4px;top:18.22px;color:#1f2d3d;letter-spacing:-0.21px">5DC Thank You Page Non VIP</div><div class="td" style="left:523px;width:134px;top:17.12px">62</div><div class="td" style="left:657px;width:191.3px;top:17.12px">52</div><div class="td" style="left:848.3px;width:115.1px;top:17.12px">0</div><div class="td" style="left:963.4px;width:176.5px;top:17.12px">0.00%</div><div class="td" style="left:1139.9px;width:156.2px;top:17.12px">-</div><div class="td" style="left:1296.1px;width:196.1px;top:17.12px">-</div><div class="td" style="left:1492.2px;width:213.1px;top:17.12px">-</div><div class="td" style="left:1705.3px;width:165.2px;top:17.12px">-</div><div class="td" style="left:1870.5px;width:220px;top:17.12px">-</div></div>
  <div class="tr" style="top:894.2px;height:60.4px"><svg class="abs" style="left:28.4px;top:18.2px" width="9.85" height="26.3" viewBox="0 0 192 512"><path fill="#1f2d3d" d="M0 384.662V127.338c0-17.818 21.543-26.741 34.142-14.142l128.662 128.662c7.810 7.810 7.810 20.474 0 28.284L34.142 398.804C21.543 411.404 0 402.480 0 384.662z"/></svg><svg class="abs" style="left:63px;top:17.3px" width="30" height="26.7" viewBox="0 0 576 512"><path fill="#1f2d3d" d="M528.12 301.319l47.273-208C578.806 78.301 567.391 64 551.99 64H159.208l-9.166-44.810C147.758 8.021 137.930 0 126.529 0H24C10.745 0 0 10.745 0 24v16c0 13.255 10.745 24 24 24h69.883l70.248 343.435C147.325 417.100 136 435.222 136 456c0 30.928 25.072 56 56 56s56-25.072 56-56c0-15.674-6.447-29.835-16.824-40h209.647C430.447 426.165 424 440.326 424 456c0 30.928 25.072 56 56 56s56-25.072 56-56c0-22.172-12.888-41.332-31.579-50.405l5.517-24.276c3.413-15.018-8.002-29.319-23.403-29.319H218.117l-6.545-32h293.145c11.206 0 20.920-7.754 23.403-18.681z"/></svg><div class="nm" style="left:105.3px;top:18.22px;color:#1f2d3d;letter-spacing:0.06px">5DC Reverse Outreach Scripts Chec…</div><div class="td" style="left:523px;width:134px;top:17.12px">46</div><div class="td" style="left:657px;width:191.3px;top:17.12px">37</div><div class="td" style="left:848.3px;width:115.1px;top:17.12px">9</div><div class="td" style="left:963.4px;width:176.5px;top:17.12px">24.32%</div><div class="td lk" style="left:1139.9px;width:156.2px;top:17.12px">9</div><div class="td" style="left:1296.1px;width:196.1px;top:17.12px">24.32%</div><div class="td" style="left:1492.2px;width:213.1px;top:17.12px">$269.91</div><div class="td" style="left:1705.3px;width:165.2px;top:17.12px">$5.87</div><div class="td" style="left:1870.5px;width:220px;top:17.12px">$7.29</div></div>
  <div class="tr" style="top:954.4px;height:60.4px"><svg class="abs" style="left:20px;top:17.1px" width="27.3" height="27.3" viewBox="0 0 512 512"><path fill="#1f2d3d" d="M502.3 190.8c3.9-3.1 9.7-.2 9.7 4.7V400c0 26.500-21.500 48-48 48H48c-26.500 0-48-21.500-48-48V195.600c0-5 5.700-7.800 9.700-4.700 22.400 17.400 52.100 39.500 154.100 113.600 21.100 15.400 56.700 47.800 92.200 47.600 35.700.3 72-32.800 92.300-47.600 102-74.100 131.600-96.300 154-113.700zM256 320c23.200.4 56.600-29.200 73.400-41.400 132.700-96.300 142.800-104.700 173.400-128.700 5.800-4.500 9.200-11.500 9.200-18.900v-19c0-26.500-21.500-48-48-48H48C21.500 64 0 85.500 0 112v19c0 7.400 3.400 14.300 9.200 18.900 30.600 23.900 40.700 32.400 173.400 128.700 16.800 12.200 50.200 41.800 73.400 41.400z"/></svg><div class="nm" style="left:61.4px;top:18.22px;color:#1f2d3d;letter-spacing:-0.21px">5DC Thank You Page Non VIP</div><div class="td" style="left:523px;width:134px;top:17.12px">8</div><div class="td" style="left:657px;width:191.3px;top:17.12px">7</div><div class="td" style="left:848.3px;width:115.1px;top:17.12px">0</div><div class="td" style="left:963.4px;width:176.5px;top:17.12px">0.00%</div><div class="td" style="left:1139.9px;width:156.2px;top:17.12px">-</div><div class="td" style="left:1296.1px;width:196.1px;top:17.12px">-</div><div class="td" style="left:1492.2px;width:213.1px;top:17.12px">-</div><div class="td" style="left:1705.3px;width:165.2px;top:17.12px">-</div><div class="td" style="left:1870.5px;width:220px;top:17.12px">-</div></div>
  </div><!--TB1-->
</div>
<!--W0--><div id="wm"><span class="r">R</span><span class="a">a</span><span class="y">y</span></div><!--W1-->
</body>
</html>
